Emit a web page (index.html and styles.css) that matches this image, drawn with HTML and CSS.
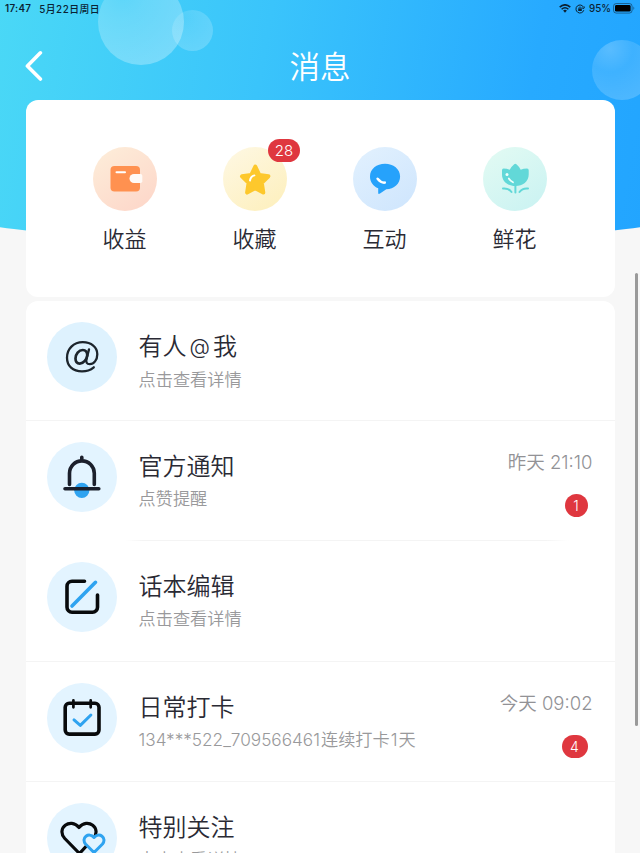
FILE: index.html
```html
<!DOCTYPE html>
<html lang="zh-Hans">

<head>
    <meta charset="UTF-8">
    <meta name="viewport" content="width=device-width, initial-scale=1.0">
    <title>消息</title>
    <link rel="stylesheet" href="styles.css">
</head>

<body>

    <div class="header">
        <span class="bubble bubble-big"></span>
        <span class="bubble bubble-small"></span>
        <span class="bubble bubble-right"></span>

        <div class="status-bar">
            <span class="clock">17:47</span>
            <span class="date">5月22日周日</span>
            <div class="status-icons">
                <svg width="12" height="9" viewBox="0 0 12 9" fill="none" stroke="#0b2233">
                    <path d="M.7 3.1Q6-1.5 11.3 3.1" stroke-width="1.6"/>
                    <path d="M2.6 5.2Q6 2.2 9.4 5.2" stroke-width="1.5"/>
                    <path d="M4.1 6.6Q6 5 7.9 6.6L6 8.7z" fill="#0b2233" stroke="none"/>
                </svg>
                <svg width="10" height="10" viewBox="0 0 10 10" fill="none" stroke="#0b2233">
                    <path d="M8.6 3.3A4 4 0 1 0 8.8 6.2M9.6 2.6L8.7 4.6 6.9 3.8" stroke-width="1"/>
                    <path d="M3.2 4.6h3.6v2.4H3.2z" fill="#0b2233" stroke="none"/>
                    <path d="M4 4.8V3.9a1 1 0 0 1 2 0v.9" stroke-width=".7"/>
                </svg>
                <span>95%</span>
                <svg class="battery" width="22" height="11" viewBox="0 0 22 11">
                    <rect x=".5" y=".5" width="18.6" height="9.6" rx="2.8" fill="none" stroke="#0b2233" stroke-opacity=".5"/>
                    <rect x="2" y="2" width="15.6" height="6.6" rx="1.4" fill="#000"/>
                    <path d="M20.4 3.6q1.8 1.7 0 3.4z" fill="#0b2233" fill-opacity=".5"/>
                </svg>
            </div>
        </div>

        <div class="nav">
            <svg class="back" width="18" height="32" viewBox="0 0 18 32">
                <path d="M15.4 2.8L2.4 16 15.4 29" fill="none" stroke="#fff" stroke-width="3.6" stroke-linecap="round" stroke-linejoin="round"/>
            </svg>
            <h1>消息</h1>
        </div>
    </div>

    <div class="card shortcuts">
        <div class="shortcut">
            <div class="circle orange">
                <svg width="64" height="64" viewBox="0 0 64 64">
                    <rect x="17.5" y="19" width="29.5" height="25.5" rx="4" fill="#ff9150"/>
                    <path d="M23.5 25.3h8.500" stroke="#fff" stroke-width="2" stroke-linecap="round"/>
                    <path d="M41 27h6.5a1.8 1.8 0 0 1 1.8 1.8v5.4a1.8 1.8 0 0 1-1.8 1.8H41a4.5 4.5 0 0 1 0-9z" fill="#fffaf6"/>
                </svg>
            </div>
            <span>收益</span>
        </div>
        <div class="shortcut">
            <div class="circle yellow">
                <svg width="64" height="64" viewBox="0 0 64 64">
                    <path d="M32.3 19.5l4 8.5 9.1 1.3-6.6 6.6 1.5 9.7-8-4.4-8.2 4.4 1.5-9.7-6.6-6.6 9.2-1.3z" fill="#fdc82c" stroke="#fdc82c" stroke-width="4" stroke-linejoin="round"/>
                    <path d="M27 33.5Q27.6 29.4 31.400 28.400" fill="none" stroke="#fff" stroke-width="2" stroke-linecap="round"/>
                </svg>
                <span class="badge">28</span>
            </div>
            <span>收藏</span>
        </div>
        <div class="shortcut">
            <div class="circle blue">
                <svg width="64" height="64" viewBox="0 0 64 64">
                    <path d="M32 16.8c8.4 0 15.1 5.3 15.1 12.6 0 7-6 12.8-13.8 12.9L27 46.6q-1.8 1.2-1.8-.8v-4.5C20 39.2 17 34.5 17 29.4c0-7.3 6.6-12.6 15-12.6z" fill="#26a2fb"/>
                    <path d="M24.6 31.8Q28 36 31.8 35.6" fill="none" stroke="#fff" stroke-width="2.5" stroke-linecap="round"/>
                </svg>
            </div>
            <span>互动</span>
        </div>
        <div class="shortcut">
            <div class="circle green">
                <svg width="64" height="64" viewBox="0 0 64 64" fill="none" stroke="#62d8d8" stroke-linecap="round">
                    <path d="M20.5 21.5q3.3 0 6.2 1.3 1.5-3.2 4.5-5.6 1.1-.9 2.2 0 2.7 2.2 4.3 5.6 2.6-1.3 6.4-1.3 1.6 0 1.6 1.7v4.3c0 7-5.9 11.5-13.3 11.5S19 34.5 19 27.5v-4.3q0-1.7 1.5-1.7z" fill="#62d8d8" stroke="none"/>
                    <path d="M32.4 38v7.5M20 41.5q5.5-.6 8.5 3.5M45 41.5q-5.5-.6-8.5 3.5" stroke-width="2"/>
                    <circle cx="24" cy="27.4" r="1.5" fill="#effffc" stroke="none"/>
                    <path d="M25.8 31.5q1.5 2.5 4.2 3.8" stroke="#effffc" stroke-width="1.7"/>
                </svg>
            </div>
            <span>鲜花</span>
        </div>
    </div>

    <div class="card list">
        <div class="row">
            <div class="avatar at">
                <svg width="70" height="70" viewBox="0 0 70 70" fill="none" stroke="#1d252c" stroke-linecap="round">
                    <path d="M46.8 45.3C43.5 48 39.5 49.4 35 49.4c-9.2 0-15-5.5-15-13.7 0-8.8 6.5-15.5 15.8-15.5 8.5 0 14.5 5 14.5 12 0 5.8-3.5 10-7.5 10-3.2 0-4-2.2-3.3-5.1l2.5-9.7" stroke-width="2.3"/>
                    <path d="M40.3 33.2c-.1-3.3-1.7-5.2-4.5-5.2-4 0-7.3 4-7.3 8.5 0 3.1 1.7 5.1 4.3 5.1 3.8 0 7.1-4.2 7.5-8.4z" stroke-width="2.7"/>
                </svg>
            </div>
            <div class="info">
                <h2>有人<i>@</i>我</h2>
                <p>点击查看详情</p>
            </div>
        </div>
        <div class="row inset">
            <div class="avatar">
                <svg width="70" height="70" viewBox="0 0 70 70" fill="none" stroke="#1c202c" stroke-width="3.6" stroke-linecap="round">
                    <circle cx="34.8" cy="48.3" r="7.6" fill="#2fa3f0" stroke="none"/>
                    <path d="M22.5 42.5V31.3a12.4 12.4 0 0 1 24.8 0v11.2M34.8 19v-3.8M18 46.7h33.8"/>
                </svg>
            </div>
            <div class="info">
                <h2>官方通知</h2>
                <p>点赞提醒</p>
            </div>
            <div class="meta">
                <time>昨天 21:10</time>
                <span class="badge single">1</span>
            </div>
        </div>
        <div class="row">
            <div class="avatar">
                <svg width="70" height="70" viewBox="0 0 70 70" fill="none" stroke="#080a0c" stroke-width="3.6" stroke-linecap="round">
                    <path d="M37.5 19.3H25a5 5 0 0 0-5 5v21a5 5 0 0 0 5 5h20.5a5 5 0 0 0 5-5V33"/>
                    <path d="M48.5 20.3L25 44" stroke="#2fa3f0"/>
                </svg>
            </div>
            <div class="info">
                <h2>话本编辑</h2>
                <p>点击查看详情</p>
            </div>
        </div>
        <div class="row">
            <div class="avatar">
                <svg width="70" height="70" viewBox="0 0 70 70" fill="none" stroke="#080a0c" stroke-width="3.6" stroke-linecap="round" stroke-linejoin="round">
                    <rect x="18.2" y="20.3" width="33.8" height="30.8" rx="4"/>
                    <path d="M26.4 17.3v7M43.7 17.3v7" stroke-width="2.7"/>
                    <path d="M27 36.9l6.3 5.5L43.9 32" stroke="#2fa3f0" stroke-width="3"/>
                </svg>
            </div>
            <div class="info">
                <h2>日常打卡</h2>
                <p>134***522_709566461<span class="gap">连续打卡</span>1<span class="gap">天</span></p>
            </div>
            <div class="meta">
                <time>今天 09:02</time>
                <span class="badge double">4</span>
            </div>
        </div>
        <div class="row">
            <div class="avatar">
                <svg width="70" height="70" viewBox="0 0 70 70" fill="none" stroke-linejoin="round">
                    <path d="M32.5 50.5L17.8 35.5c-9-10 5.5-21.5 14.2-11 8.7-10.5 23.2 1 14.2 11z" stroke="#080a0c" stroke-width="3.2"/>
                    <path d="M47 49.5L38.5 41c-4.8-6 3.3-12.5 8.5-6.5 5.2-6 13.3.5 8.5 6.5z" fill="#e3f4ff" stroke="#2fa3f0" stroke-width="3"/>
                </svg>
            </div>
            <div class="info">
                <h2>特别关注</h2>
                <p>点击查看详情</p>
            </div>
        </div>
    </div>

    <div class="scrollbar"></div>

</body>

</html>
```
FILE: styles.css
```css
* {
    box-sizing: border-box;
}

body {
    margin: 0;
    height: 853px;
    overflow: hidden;
    position: relative;
    background-color: #f7f7f7;
    font-family: Inter, "Noto Sans CJK SC", sans-serif;
    font-weight: 350;
    color: #2a2a34;
}

h1, h2, p {
    margin: 0;
    font-weight: 350;
}

.header {
    height: 248px;
    position: relative;
    overflow: hidden;
    background: linear-gradient(100deg, #4ad8f6 0%, #3ac4fb 40%, #27aaff 80%, #22a5ff 100%);
    clip-path: ellipse(800px 248px at 50% 0);
}

.bubble {
    position: absolute;
    border-radius: 50%;
    background: radial-gradient(circle at 28% 18%, rgba(255, 255, 255, 0.14), rgba(255, 255, 255, 0.2) 25%, rgba(255, 255, 255, 0.32));
}

.bubble-big {
    left: 98px;
    top: -21px;
    width: 86px;
    height: 86px;
}

.bubble-small {
    left: 172px;
    top: 10px;
    width: 41px;
    height: 41px;
    opacity: 0.7;
}

.bubble-right {
    left: 592px;
    top: 40px;
    width: 60px;
    height: 60px;
    background: radial-gradient(circle at 30% 15%, rgba(255, 255, 255, 0.24), rgba(255, 255, 255, 0.12) 35%, rgba(255, 255, 255, 0.22));
}

.status-bar {
    position: relative;
    display: flex;
    align-items: center;
    height: 17px;
    padding: 0 5px;
    font-size: 9.8px;
    font-weight: 600;
    color: #0b2233;
}

.clock {
    letter-spacing: 0.3px;
}

.date {
    margin-left: 8px;
    font-weight: 500;
    letter-spacing: 0.5px;
}

.status-icons {
    display: flex;
    align-items: center;
    gap: 4px;
    margin-left: auto;
    font-weight: 500;
}

.battery {
    margin-left: -2px;
}

.nav {
    position: relative;
    display: flex;
    align-items: center;
    height: 66px;
    padding: 0 25px;
    margin-top: 16px;
}

.nav h1 {
    flex: 1;
    margin-right: 18px;
    padding-bottom: 2px;
    text-align: center;
    font-size: 30.5px;
    color: #fff;
}

.card {
    position: relative;
    width: 589px;
    margin: 0 auto;
    border-radius: 12px;
    background-color: #fff;
}

.shortcuts {
    display: flex;
    justify-content: center;
    height: 197px;
    margin-top: -148px;
    padding-top: 47px;
}

.shortcut {
    display: flex;
    flex-direction: column;
    align-items: center;
    gap: 11px;
    width: 130px;
    font-size: 22px;
    line-height: 34px;
}

.shortcut > span {
    margin-right: 1px;
}

.circle {
    position: relative;
    width: 64px;
    height: 64px;
    border-radius: 50%;
}

.circle svg,
.avatar svg {
    display: block;
}

.orange {
    background: linear-gradient(145deg, #fdeeda, #fdd5c8);
}

.yellow {
    background: linear-gradient(145deg, #fef8e4, #fdefbb);
}

.blue {
    background: linear-gradient(145deg, #e2f1fe, #cee5fd);
}

.green {
    background: linear-gradient(145deg, #e3fbf3, #c9f2f2);
}

.badge {
    height: 23px;
    border-radius: 12px;
    background-color: #df373f;
    color: #fff;
    font-size: 15px;
    line-height: 23px;
    text-align: center;
}

.circle .badge {
    position: absolute;
    left: 45px;
    top: -8px;
    width: 32px;
}

.list {
    margin-top: 4px;
}

.row {
    display: flex;
    height: 120.2px;
    padding: 21px 22px 0 21px;
    border-bottom: 1px solid #f4f4f4;
}

.row.inset {
    border-image: linear-gradient(to right, #fff 17%, #f4f4f4 20%, #f4f4f4 88%, #fff 92%) 1;
}

.avatar {
    width: 70px;
    height: 70px;
    border-radius: 50%;
    background-color: #e3f4ff;
}

.avatar.at {
    background-color: #def2fe;
}

.info {
    flex: 1;
    margin-left: 22px;
    padding-top: 7px;
}

.info h2 {
    font-size: 24px;
    line-height: 36px;
}

.info h2 i {
    position: relative;
    top: -1px;
    margin: 0 3px;
    font-size: 21px;
    font-style: normal;
}

.info p {
    margin-top: 1px;
    font-size: 17.2px;
    line-height: 26px;
    white-space: nowrap;
    color: #99999b;
}

.gap {
    margin: 0 1px;
}

.meta {
    display: flex;
    flex-direction: column;
    align-items: flex-end;
    font-size: 18.5px;
    color: #929296;
}

.meta time {
    line-height: 41px;
}

.meta .badge {
    margin: 11px 5px 0 0;
    font-size: 14px;
}

.single {
    width: 23px;
}

.double {
    width: 26px;
}

.scrollbar {
    position: absolute;
    left: 635px;
    top: 273px;
    width: 3px;
    height: 453px;
    border-radius: 2px;
    background-color: #9a9a9a;
}
```
